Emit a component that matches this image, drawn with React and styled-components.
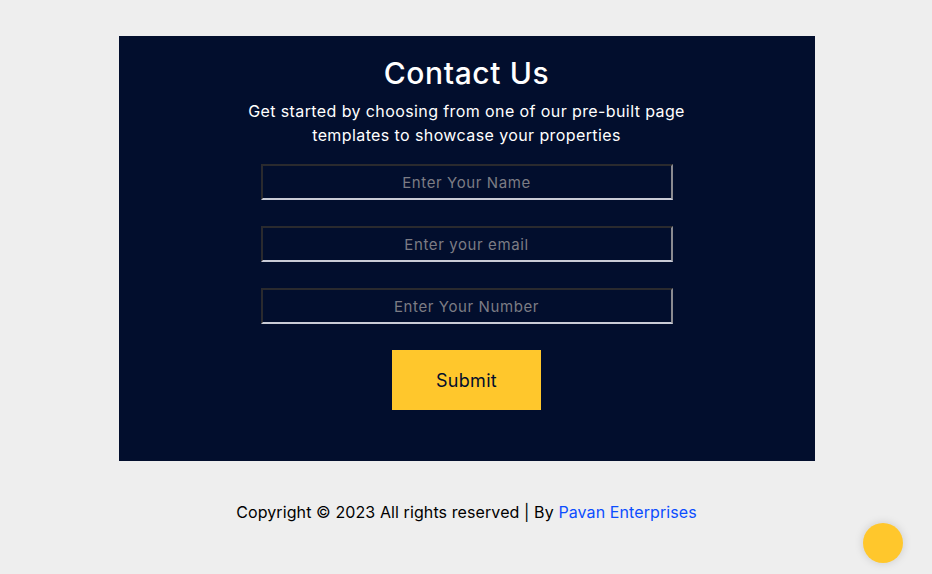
import React from "react"
import styled, { createGlobalStyle } from "styled-components"

const GlobalStyle = createGlobalStyle`
  body {
    margin: 0;
    background: #eeeeee;
    font-family: Inter, "Noto Sans", sans-serif;
  }
`

const Page = styled.div`
  display: flex;
  flex-direction: column;
  align-items: center;
  padding: 36px 0 0 1px;
  min-height: 574px;
  box-sizing: border-box;
`

const Card = styled.section`
  width: 696px;
  background: #020e2d;
  padding: 15px 0 51px;
  box-sizing: border-box;
  display: flex;
  flex-direction: column;
  align-items: center;
  color: #ffffff;
`

const Title = styled.h2`
  margin: 0;
  font-size: 30px;
  font-weight: 500;
  line-height: 45px;
  letter-spacing: 0.6px;
`

const Subtitle = styled.p`
  margin: 3px 0 17px;
  font-size: 16px;
  line-height: 24px;
  text-align: center;
  letter-spacing: 0.4px;
`

const Form = styled.form`
  display: flex;
  flex-direction: column;
  align-items: center;
  gap: 26px;
`

const Input = styled.input`
  width: 412px;
  height: 36px;
  box-sizing: border-box;
  background: transparent;
  border: 2px solid;
  border-color: #2a2a2e #8a8a90 #c9cbd6 #2a2a2e;
  text-align: center;
  font-family: inherit;
  font-size: 15px;
  letter-spacing: 0.6px;
  color: #ffffff;
  outline: none;

  &::placeholder {
    color: #7c7c84;
  }
`

const Button = styled.button`
  width: 149px;
  height: 60px;
  border: none;
  background: #ffc72c;
  color: #020e2d;
  font-family: inherit;
  font-size: 18px;
  letter-spacing: 0.3px;
  cursor: pointer;
`

const Footer = styled.footer`
  margin-top: 39px;
  font-size: 16px;
  line-height: 24px;
  letter-spacing: 0.1px;
  color: #000000;
`

const Link = styled.a`
  color: #0b4dff;
  text-decoration: none;
`

const ScrollTop = styled.button`
  position: fixed;
  right: 29px;
  bottom: 11px;
  width: 40px;
  height: 40px;
  border-radius: 50%;
  border: none;
  background: #ffc72c;
  box-shadow: 0 0 10px rgba(0, 0, 0, 0.15);
`

export default function App() {
  return (
    <>
      <GlobalStyle />
      <Page>
        <Card>
          <Title>Contact Us</Title>
          <Subtitle>
            Get started by choosing from one of our pre-built page
            <br />
            templates to showcase your properties
          </Subtitle>
          <Form onSubmit={(e) => e.preventDefault()}>
            <Input type="text" placeholder="Enter Your Name" />
            <Input type="email" placeholder="Enter your email" />
            <Input type="tel" placeholder="Enter Your Number" />
            <Button type="submit">Submit</Button>
          </Form>
        </Card>
        <Footer>
          Copyright © 2023 All rights reserved | By{" "}
          <Link href="#">Pavan Enterprises</Link>
        </Footer>
      </Page>
      <ScrollTop aria-label="Scroll to top" />
    </>
  )
}
